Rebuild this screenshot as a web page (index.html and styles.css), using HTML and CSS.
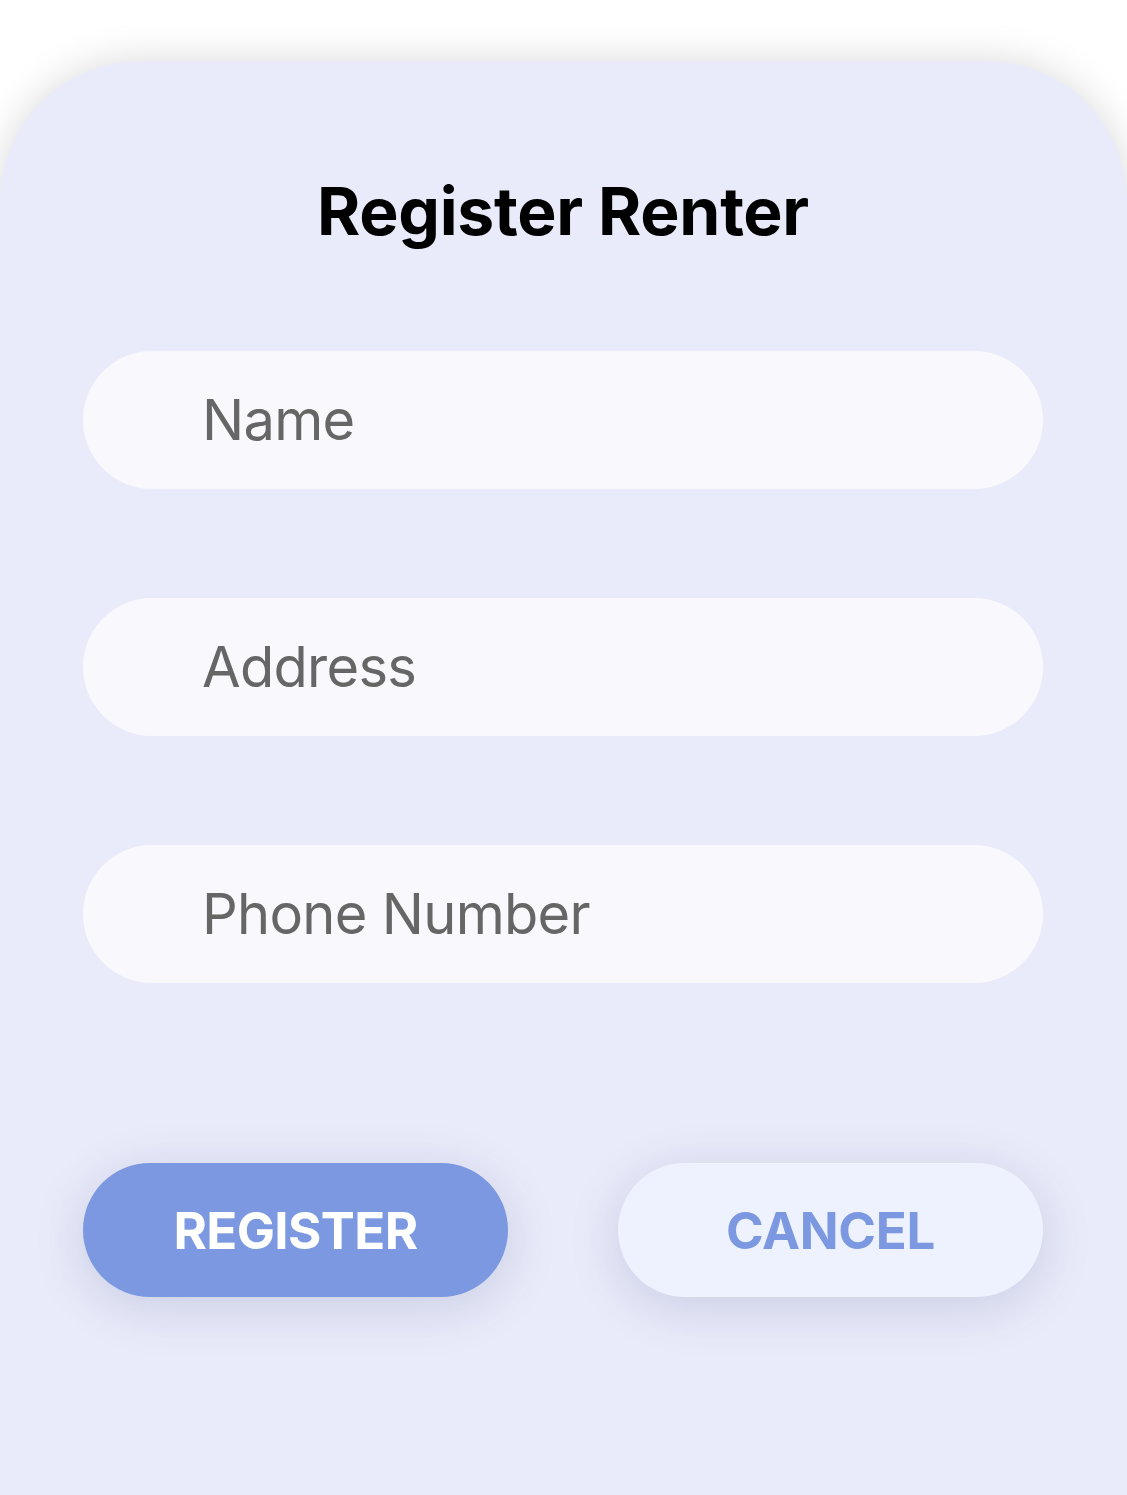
FILE: index.html
```html
<!DOCTYPE html>
<html lang="en">
<head>
<meta charset="utf-8">
<title>Register Renter</title>
<link rel="stylesheet" href="styles.css">
</head>
<body>
<div class="page">
  <main class="card">
    <h1 class="title">Register Renter</h1>
    <form class="form">
      <div class="field"><span class="placeholder">Name</span></div>
      <div class="field"><span class="placeholder">Address</span></div>
      <div class="field"><span class="placeholder">Phone Number</span></div>
      <div class="actions">
        <button type="button" class="btn btn-primary">REGISTER</button>
        <button type="button" class="btn btn-secondary">CANCEL</button>
      </div>
    </form>
  </main>
</div>
</body>
</html>
```
FILE: styles.css
```css
html, body {
  margin: 0;
  padding: 0;
  background: #ffffff;
  font-family: Inter, "Noto Sans", "Liberation Sans", sans-serif;
}
.page {
  width: 1127px;
  height: 1495px;
  overflow: hidden;
  padding-top: 61px;
  box-sizing: border-box;
}
.card {
  background: #e9ebfa;
  border-radius: 140px 140px 0 0;
  box-shadow: 0 0 40px rgba(0, 0, 0, 0.15);
  min-height: 1600px;
  padding: 110px 84px 0 83px;
  box-sizing: border-box;
}
.title {
  margin: 0;
  text-align: center;
  font-size: 66px;
  font-weight: 700;
  line-height: 80px;
  color: #000;
  letter-spacing: -0.3px;
}
.form {
  display: flex;
  flex-direction: column;
  margin-top: 100px;
}
.field {
  height: 138px;
  border-radius: 69px;
  background: #f9f9fd;
  display: flex;
  align-items: center;
  padding-left: 119px;
  margin-bottom: 109px;
}
.field:nth-child(3) {
  margin-bottom: 180px;
}
.placeholder {
  font-size: 56px;
  color: #666666;
  line-height: 68px;
  letter-spacing: -0.7px;
}
.actions {
  display: flex;
  justify-content: space-between;
}
.btn {
  width: 425px;
  height: 134px;
  border: none;
  border-radius: 67px;
  font-family: Inter, "Noto Sans", "Liberation Sans", sans-serif;
  font-size: 51px;
  font-weight: 700;
  padding: 0;
  box-shadow: 0 10px 50px rgba(60, 70, 120, 0.18);
}
.btn-primary {
  background: #7b98e0;
  color: #ffffff;
  letter-spacing: -0.6px;
}
.btn-secondary {
  background: #eef2fe;
  color: #7b98e0;
  letter-spacing: -0.3px;
}
```
